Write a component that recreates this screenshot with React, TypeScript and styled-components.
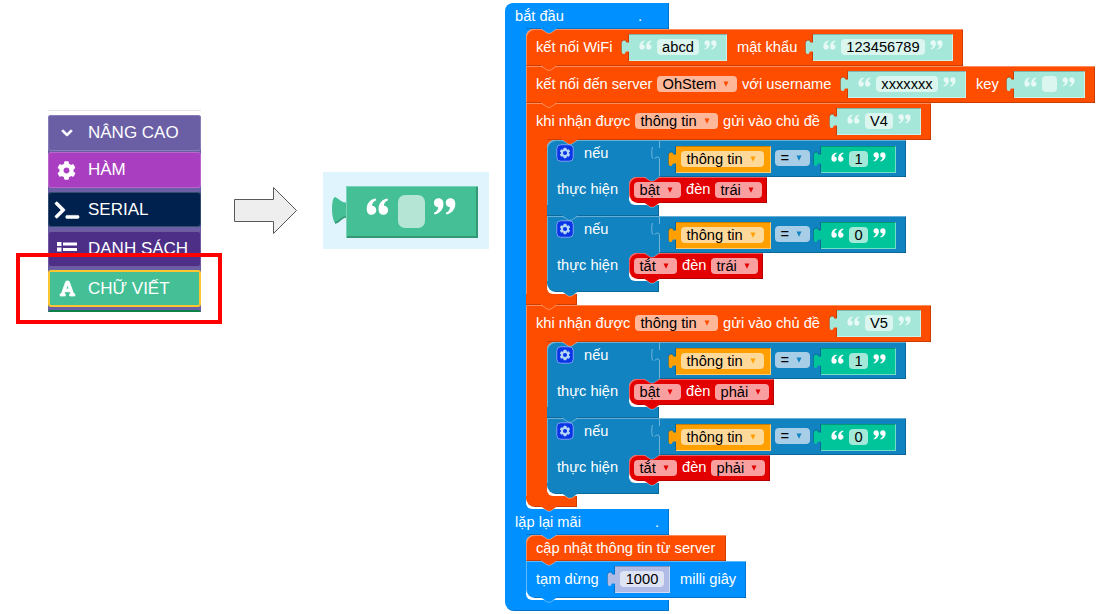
import React from "react";
import styled, { createGlobalStyle } from "styled-components";
import { FaChevronDown, FaCog, FaFont, FaTerminal } from "react-icons/fa";

const GlobalStyle = createGlobalStyle`
  body { margin: 0; background: #fff; }
  * { box-sizing: border-box; }
`;

const C = {
  blue: "#0090ff",
  orange: "#ff4d00",
  logic: "#1083c0",
  red: "#e30000",
  amber: "#ffa000",
  mint: "#a5e7d8",
  green: "#00c49a",
  lilac: "#b0bbe6",
};

const FONT = `"Liberation Sans", Arial, sans-serif`;

const Scene = styled.main`
  display: flex;
  align-items: flex-start;
  width: 1097px;
  height: 614px;
  overflow: hidden;
  background: #fff;
  font-family: ${FONT};
`;

/* ---------- toolbox ---------- */

const Toolbox = styled.nav`
  position: relative;
  flex: none;
  width: 153px;
  height: 202px;
  margin: 110px 0 0 48px;
  padding-top: 4px;
  border-top: 1px solid #e4e4e4;
`;

const ToolboxList = styled.div`
  display: flex;
  flex-direction: column;
  height: 197px;
  background: #6a5ea5;
  border-radius: 3px 3px 0 0;
  overflow: hidden;
`;

const Category = styled.div<{ $bg: string; $mt?: number; $h?: number; $border?: string }>`
  display: flex;
  flex: none;
  align-items: center;
  height: ${(p) => p.$h ?? 36}px;
  margin-top: ${(p) => p.$mt ?? 0}px;
  background: ${(p) => p.$bg};
  border: ${(p) => p.$border ?? "1px solid rgba(255,255,255,.2)"};
  border-radius: 3px;
  color: #fff;
  font-size: 17px;
  white-space: nowrap;
`;

const CategoryIcon = styled.span<{ $shift?: number; $bold?: number }>`
  display: flex;
  justify-content: center;
  width: 35px;
  margin-right: ${(p) => 4 - (p.$shift ?? 0)}px;
  svg { display: block; flex: none; overflow: visible; }
  svg path { stroke: #fff; stroke-width: ${(p) => p.$bold ?? 0}; }
`;

const NextCategory = styled.div`
  flex: none;
  height: 3px;
  margin-top: 3px;
  background: #0c8148;
  border-radius: 3px 3px 0 0;
`;

const Highlight = styled.div`
  position: absolute;
  left: -32px;
  top: 142px;
  width: 206px;
  height: 71px;
  border: 4px solid #fe0000;
`;

/* ---------- arrow and sample block ---------- */

const ArrowBox = styled.div`
  flex: none;
  width: 65px;
  height: 49px;
  margin: 186px 0 0 32px;
  svg { display: block; }
`;

const Sample = styled.div`
  display: flex;
  flex: none;
  align-items: flex-start;
  width: 166px;
  height: 77px;
  margin: 172px 0 0 25px;
  padding: 14px 0 0 8px;
  background: #e0f4fe;
`;

const SampleTab = styled.svg`
  display: block;
  flex: none;
  width: 16px;
  height: 30px;
  margin: 9px -1px 0 0;
`;

const SampleBody = styled.div`
  display: flex;
  align-items: flex-start;
  width: 132px;
  height: 52px;
  padding: 9px 0 0 20px;
  background: #44bf96;
  box-shadow: inset 1px 1px 0 #7bd2b5, inset -2px -2px 0 #339873;
`;

const SampleField = styled.div`
  width: 27px;
  height: 33px;
  margin: 0 8px 0 9px;
  border-radius: 7px;
  background: #b4e5d5;
`;

/* ---------- program blocks ---------- */

const Workspace = styled.section`
  flex: none;
  width: 592px;
  margin: 3px 0 0 16px;
  font-size: 14.67px;
  color: #fff;
  white-space: nowrap;
`;

const Block = styled.div`
  position: relative;
`;

const LIGHT = "rgba(255,255,255,.36)";
const DARK = "rgba(0,0,0,.2)";

const Row = styled.div<{
  $c: string;
  $w: number;
  $h: number;
  $mouth?: number;
  $tl?: boolean;
  $bl?: boolean;
  $plain?: boolean;
}>`
  position: relative;
  display: flex;
  align-items: flex-start;
  width: ${(p) => p.$w}px;
  height: ${(p) => p.$h}px;
  padding-left: 10px;
  background: ${(p) => p.$c};
  border-radius: ${(p) => (p.$tl ? 8 : 0)}px 0 0 ${(p) => (p.$bl ? 9 : 0)}px;
  box-shadow: ${(p) => (p.$plain ? "" : `inset 1px 1px 0 ${LIGHT},`)} inset -1px 0 0 ${DARK};
  &::after {
    content: "";
    position: absolute;
    left: ${(p) => p.$mouth ?? (p.$bl ? 8 : 0)}px;
    right: 0;
    bottom: 0;
    height: 1px;
    background: ${DARK};
  }
`;

const Body = styled.div`
  display: flex;
`;

const Spine = styled.div<{ $c: string; $w: number; $plain?: boolean }>`
  flex: none;
  width: ${(p) => p.$w + 8}px;
  margin-right: -8px;
  padding-left: 10px;
  line-height: 24px;
  background: ${(p) => p.$c};
  box-shadow: ${(p) => (p.$plain ? "none" : `inset 1px 0 0 ${LIGHT}`)};
`;

const Mouth = styled.div`
  position: relative;
  z-index: 1;
  padding-bottom: 2px;
  background: #fff;
  border-radius: 8px 0 0 6px;
`;

const Foot = styled.div<{ $c: string; $w: number; $h?: number; $round?: boolean }>`
  width: ${(p) => p.$w}px;
  height: ${(p) => p.$h ?? 11}px;
  background: ${(p) => p.$c};
  border-bottom-left-radius: ${(p) => (p.$round ? 9 : 0)}px;
  box-shadow: inset -1px -1px 0 ${DARK};
`;

const BumpSvg = styled.svg<{ $x: number }>`
  position: absolute;
  z-index: 2;
  left: ${(p) => p.$x}px;
  bottom: -5px;
  width: 16px;
  height: 6px;
`;

const Bump = ({ c, x = 15 }: { c: string; x?: number }) => (
  <BumpSvg $x={x} viewBox="0 0 16 6">
    <path d="M0 0 H15.5 V1 L9.5 5 H6.5 L0.5 1 Z" fill={c} />
    <path d="M0.5 1.3 L6.5 5.2 H9.5 L15.5 1.3" fill="none" stroke={LIGHT} />
  </BumpSvg>
);

const Label = styled.span<{ $w?: number; $ml?: number; $lh?: number }>`
  flex: none;
  width: ${(p) => (p.$w ? `${p.$w}px` : "auto")};
  margin-left: ${(p) => p.$ml ?? 0}px;
  line-height: ${(p) => p.$lh ?? 36}px;
`;

const Field = styled.span<{ $w: number; $bg: string; $mt?: number; $ml?: number }>`
  position: relative;
  display: flex;
  flex: none;
  align-items: center;
  justify-content: space-between;
  width: ${(p) => p.$w}px;
  height: 16px;
  margin: ${(p) => p.$mt ?? 0}px 0 0 ${(p) => p.$ml ?? 0}px;
  padding: 0 8px 0 5.5px;
  border-radius: 4px;
  background: ${(p) => p.$bg};
  color: #000;
  line-height: 16px;
`;

const Caret = ({ c }: { c: string }) => (
  <svg width="6" height="6" viewBox="0 0 6 6">
    <path d="M0.5 0.5 H5.500 L3 5.700 Z" fill={c} />
  </svg>
);

const Pick = ({ text, w, bg, caret, mt, ml }: { text: string; w: number; bg: string; caret: string; mt?: number; ml?: number }) => (
  <Field $w={w} $bg={bg} $mt={mt} $ml={ml}>
    {text}
    <Caret c={caret} />
  </Field>
);

const ValueWrap = styled.span<{ $mt: number; $ml?: number }>`
  display: flex;
  flex: none;
  align-items: flex-start;
  margin: ${(p) => p.$mt}px 0 0 ${(p) => p.$ml ?? 0}px;
`;

const ValueBody = styled.span<{ $c: string; $w: number; $pad: number }>`
  display: flex;
  align-items: flex-start;
  width: ${(p) => p.$w}px;
  height: 27px;
  padding: 5px 0 0 ${(p) => p.$pad}px;
  background: ${(p) => p.$c};
  box-shadow: inset 0 1px 0 rgba(0,0,0,.22), inset -1px -1px 0 rgba(255,255,255,.45);
`;

const TabSvg = styled.svg`
  display: block;
  flex: none;
  width: 9px;
  height: 27px;
  margin-right: -1px;
`;

const Value = ({ c, w, mt = 5, ml, pad = 10, children }: { c: string; w: number; mt?: number; ml?: number; pad?: number; children: React.ReactNode }) => (
  <ValueWrap $mt={mt} $ml={ml}>
    <TabSvg viewBox="0 0 9 27">
      <path d="M9 8.500 H5.500 L4.500 6.500 H2 L0.500 8.500 V18 L1.800 20 H3.500 L5 17.500 H9 Z" fill={c} />
      <path d="M7.500 0 V8 H5.500 L4.500 6 H2 L0.500 8 V18.500" fill="none" stroke="rgba(0,0,0,.2)" />
      <path d="M7.500 18 V27" fill="none" stroke="rgba(0,0,0,.2)" />
    </TabSvg>
    <ValueBody $c={c} $w={w} $pad={pad}>{children}</ValueBody>
  </ValueWrap>
);

const QuoteSvg = styled.svg<{ $mt: number }>`
  display: block;
  flex: none;
  margin-top: ${(p) => p.$mt}px;
`;

const Quote = ({ close, w = 13, h = 10, mt = 1, c = "#fff" }: { close?: boolean; w?: number; h?: number; mt?: number; c?: string }) => (
  <QuoteSvg $mt={mt} width={w} height={h} viewBox="0 0 13 10">
    <g fill={c} transform={close ? "rotate(180 6.5 5)" : undefined}>
      <path d="M5.4 0.5 C2.2 1.1 0.4 3.4 0.4 6.4 C0.4 8.5 1.5 9.7 3.1 9.7 C4.700 9.7 5.8 8.600 5.8 7.100 C5.8 5.600 4.800 4.600 3.400 4.600 C3.4 3.3 4.300 2 5.8 1.4 Z" />
      <path d="M12.1 0.5 C8.9 1.1 7.1 3.4 7.1 6.4 C7.1 8.5 8.2 9.7 9.8 9.7 C11.4 9.7 12.5 8.6 12.5 7.1 C12.5 5.6 11.5 4.6 10.1 4.6 C10.1 3.3 11 2 12.5 1.4 Z" />
    </g>
  </QuoteSvg>
);

const QuotedField = styled(Field)`
  justify-content: center;
  padding: 0;
  margin: 0 5px 0 5px;
`;

const TextValue = ({ text, w, c = C.mint, mt, ml }: { text: string; w: number; c?: string; mt?: number; ml?: number }) => {
  const pale = c === C.mint;
  const ink = pale ? "#e6f9f5" : "#fff";
  return (
    <Value c={c} w={w} mt={mt} ml={ml}>
      <Quote c={ink} />
      <QuotedField $w={w - 56} $bg={pale ? "#dbf5ef" : "#a3e8d8"}>{text}</QuotedField>
      <Quote close c={ink} />
    </Value>
  );
};

const GearBox = styled.svg`
  display: block;
  flex: none;
  margin: 4px 0 0 -1px;
`;

const Gear = () => (
  <GearBox width="18" height="18" viewBox="0 0 18 18">
    <rect x="0.75" y="0.75" width="16.5" height="16.5" rx="4" fill="#0a35e6" stroke="#7c9ff2" />
    <g fill="#b5d6f5">
      {[0, 60, 120].map((a) => (
        <rect key={a} x="7.5" y="3.8" width="3" height="10.4" rx="0.6" transform={`rotate(${a} 9 9)`} />
      ))}
      <circle cx="9" cy="9" r="4" />
    </g>
    <circle cx="9" cy="9" r="2.1" fill="#0a35e6" />
  </GearBox>
);

const Socket = styled.svg`
  display: block;
  flex: none;
  width: 9px;
  height: 37px;
`;

const Condition = ({ value }: { value: string }) => (
  <Row $c={C.logic} $w={359} $h={37} $mouth={112}>
    <Gear />
    <Label $w={67} $ml={10} $lh={26}>nếu</Label>
    <Socket viewBox="0 0 9 37">
      <path d="M8.5 1 V8 M8.5 19 V37 M1.5 7 C0.5 9 0.5 16 1.5 18.5 M3.5 18.5 C6 16.5 8 16.5 8.5 19" fill="none" stroke="rgba(255,255,255,.4)" />
    </Socket>
    <Value c={C.amber} w={95} mt={6} ml={8} pad={5}>
      <Pick text="thông tin" w={83} bg="#ffd999" caret="#ffa000" />
    </Value>
    <Pick text="=" w={35} bg="#a8cde7" caret={C.logic} mt={10} ml={4} />
    <TextValue text={value} w={75} c={C.green} mt={6} ml={3} />
    <Bump c={C.logic} x={97} />
  </Row>
);

const LedAction = ({ state, stateW, side, sideW }: { state: string; stateW: number; side: string; sideW: number }) => (
  <Row $c={C.red} $w={stateW + sideW + 44} $h={26} $tl $bl>
    <Pick text={state} w={stateW} bg="#f99fa0" caret="#e30000" mt={5} ml={-5} />
    <Label $w={29} $ml={5} $lh={25}>đèn</Label>
    <Pick text={side} w={sideW} bg="#f99fa0" caret="#e30000" mt={5} />
    <Bump c={C.red} />
  </Row>
);

const IfShell = styled(Block)<{ $first: boolean }>`
  > ${Row} { border-top-left-radius: ${(p) => (p.$first ? 8 : 0)}px; }
`;

const IfBlock = ({ value, last, ...led }: { value: string; last?: boolean; state: string; stateW: number; side: string; sideW: number }) => (
  <IfShell $first={!last}>
    <Condition value={value} />
    <Body>
      <Spine $c={C.logic} $w={82}>thực hiện</Spine>
      <Mouth><LedAction {...led} /></Mouth>
    </Body>
    <Foot $c={C.logic} $w={112} $round={last} />
    <Bump c={C.logic} />
  </IfShell>
);

const Subscription = ({ topic, side, sideW, last }: { topic: string; side: string; sideW: number; last?: boolean }) => (
  <Block>
    <Row $c={C.orange} $w={405} $h={37} $mouth={21}>
      <Label $w={99}>khi nhận được</Label>
      <Pick text="thông tin" w={83} bg="#ffb799" caret={C.orange} mt={10} />
      <Label $w={106} $ml={5}>gửi vào chủ đề</Label>
      <TextValue text={topic} w={84} />
      <Bump c={C.orange} x={36} />
    </Row>
    <Body>
      <Spine $c={C.orange} $w={21} />
      <Mouth>
        <IfBlock value="1" state="bật" stateW={47} side={side} sideW={sideW} />
        <IfBlock value="0" state="tắt" stateW={43} side={side} sideW={sideW} last />
      </Mouth>
    </Body>
    <Foot $c={C.orange} $w={51} $round={last} />
    <Bump c={C.orange} />
  </Block>
);

const NumberField = styled(Field)`
  justify-content: center;
  padding: 0;
`;

const Program = () => (
  <Workspace>
    <Row $c={C.blue} $w={164} $h={26} $mouth={21} $tl $plain>
      <Label $w={123} $lh={26}>bắt đầu</Label>
      <Label $lh={26}>.</Label>
      <Bump c={C.blue} x={36} />
    </Row>
    <Body>
      <Spine $c={C.blue} $w={21} $plain />
      <Mouth>
        <Row $c={C.orange} $w={437} $h={37} $tl>
          <Label $w={85}>kết nối WiFi</Label>
          <TextValue text="abcd" w={98} />
          <Label $w={68} $ml={10}>mật khẩu</Label>
          <TextValue text="123456789" w={140} />
          <Bump c={C.orange} />
        </Row>
        <Row $c={C.orange} $w={569} $h={37}>
          <Label $w={121}>kết nối đến server</Label>
          <Pick text="OhStem" w={80} bg="#ffb799" caret={C.orange} mt={10} />
          <Label $w={98} $ml={5}>với username</Label>
          <TextValue text="xxxxxxx" w={118} />
          <Label $w={30} $ml={10}>key</Label>
          <TextValue text="" w={71} />
          <Bump c={C.orange} />
        </Row>
        <Subscription topic="V4" side="trái" sideW={47} />
        <Subscription topic="V5" side="phải" sideW={54} last />
      </Mouth>
    </Body>
    <Row $c={C.blue} $w={164} $h={26} $mouth={21} $plain>
      <Label $w={140} $lh={26}>lặp lại mãi</Label>
      <Label $lh={26}>.</Label>
      <Bump c={C.blue} x={36} />
    </Row>
    <Body>
      <Spine $c={C.blue} $w={21} $plain />
      <Mouth>
        <Row $c={C.orange} $w={200} $h={26} $tl>
          <Label $lh={26}>cập nhật thông tin từ server</Label>
          <Bump c={C.orange} />
        </Row>
        <Row $c={C.blue} $w={220} $h={37} $bl>
          <Label $w={71}>tạm dừng</Label>
          <Value c={C.lilac} w={55} pad={5}>
            <NumberField $w={44} $bg="#dfe4f5">1000</NumberField>
          </Value>
          <Label $ml={10}>milli giây</Label>
          <Bump c={C.blue} />
        </Row>
      </Mouth>
    </Body>
    <Foot $c={C.blue} $w={164} $h={11} $round />
  </Workspace>
);

const App = () => (
  <Scene>
    <GlobalStyle />
    <Toolbox>
      <ToolboxList>
        <Category $bg="#6a5ea5">
          <CategoryIcon $bold={40}><FaChevronDown size={12} /></CategoryIcon>
          NÂNG CAO
        </Category>
        <Category $bg="#a93fc0" $mt={1}>
          <CategoryIcon><FaCog size={19} /></CategoryIcon>
          HÀM
        </Category>
        <Category $bg="#00204d" $mt={4} $h={35}>
          <CategoryIcon $bold={16}><FaTerminal size={24} /></CategoryIcon>
          SERIAL
        </Category>
        <Category $bg="#4e2f88" $mt={4} $h={36}>
          <CategoryIcon>
            <svg width="20" height="17" viewBox="0 0 20 17">
              <path fill="#fff" d="M0 1h4.500v4H0zM0 6.500h4.500v4H0zM0 12h4.500v4H0zM6 1.500h14v3H6zM6 7h14v3H6zM6 12.500h14v3H6z" />
            </svg>
          </CategoryIcon>
          DANH SÁCH
        </Category>
        <Category $bg="#44bf96" $mt={3} $h={37} $border="2px solid #fbc62f">
          <CategoryIcon $shift={1} $bold={26}><FaFont size={17} /></CategoryIcon>
          CHỮ VIẾT
        </Category>
        <NextCategory />
      </ToolboxList>
      <Highlight />
    </Toolbox>

    <ArrowBox>
      <svg width="65" height="49" viewBox="0 0 65 49">
        <path d="M1.5 13.5 H40.5 V1.5 L63.5 24.5 L40.5 47.5 V35.5 H1.5 Z" fill="#eee" stroke="#595959" />
      </svg>
    </ArrowBox>

    <Sample>
      <SampleTab viewBox="0 0 16 30">
        <path d="M16 7 C12 9 7 3 4 2 C0 3 0 23 4 28 C8 28 11 21 16 22 Z" fill="#44bf96" />
        <path d="M4 28 C8 28 11 21 15 22" fill="none" stroke="#339873" strokeWidth="1.5" />
      </SampleTab>
      <SampleBody>
        <Quote w={23} h={19} mt={2} />
        <SampleField />
        <Quote close w={23} h={19} mt={2} />
      </SampleBody>
    </Sample>

    <Program />
  </Scene>
);

export default App;
